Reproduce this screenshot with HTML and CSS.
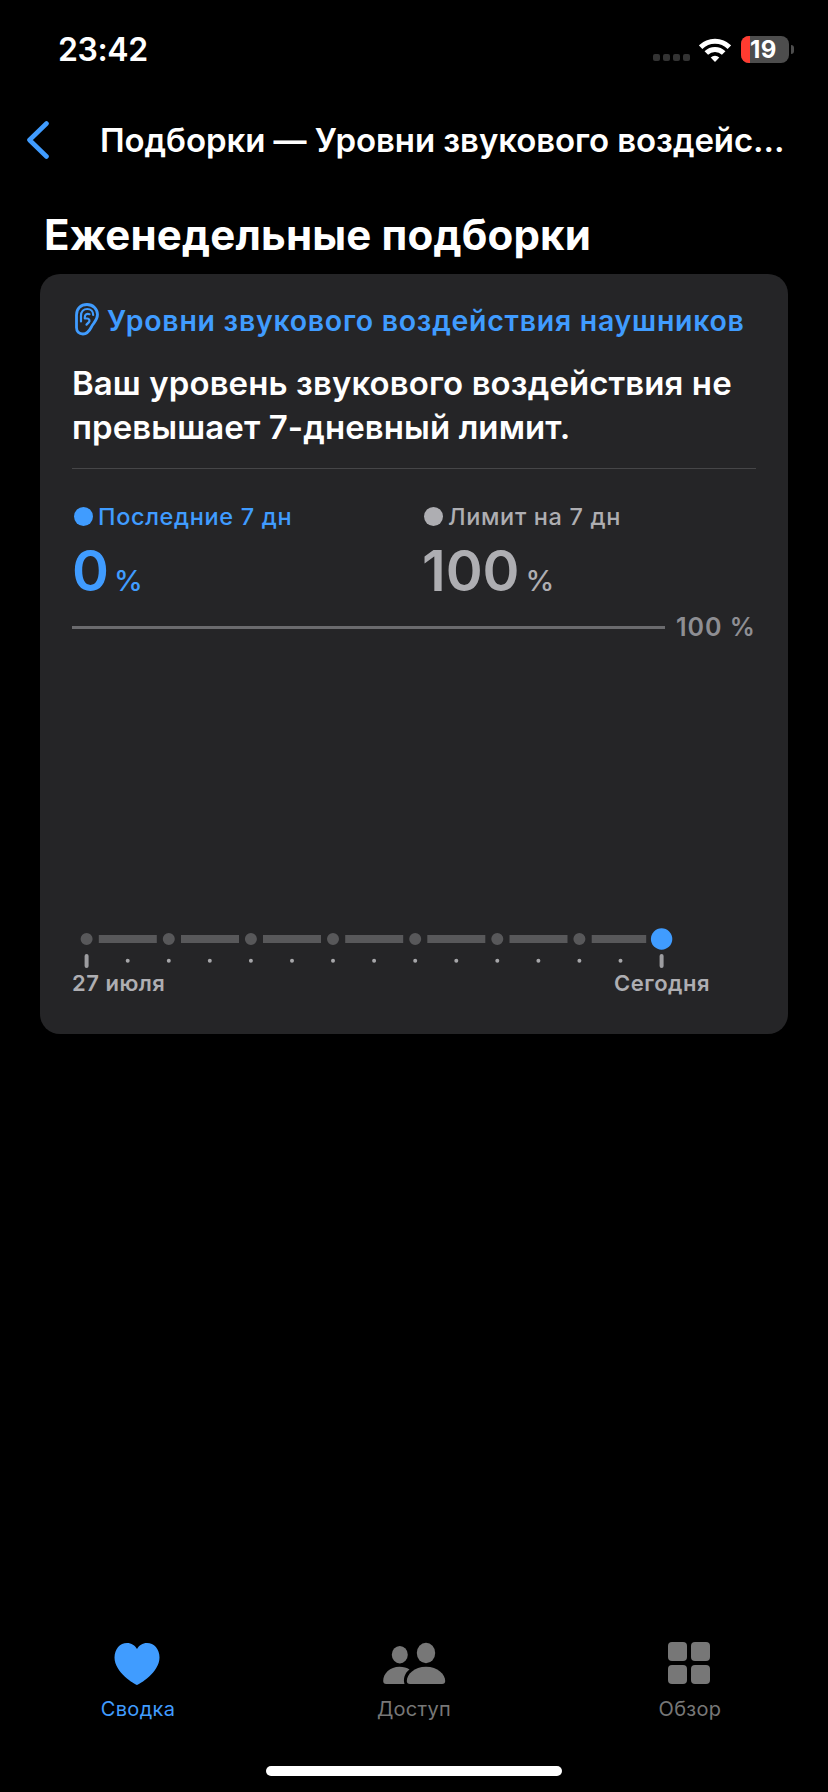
FILE: index.html
```html
<!DOCTYPE html>
<html lang="ru">
<head>
<meta charset="utf-8">
<title>Подборки</title>
<link rel="stylesheet" href="styles.css">
</head>
<body>
<div class="screen">
  <header class="status">
    <span class="time">23:42</span>
    <div class="status-icons">
      <div class="signal"><i></i><i></i><i></i><i></i></div>
      <svg class="wifi" width="32" height="24" viewBox="0 0 32 24">
        <g fill="none" stroke="#fff" stroke-width="5">
          <path d="M1.6 9.2a20.4 20.4 0 0 1 28.8 0"/>
          <path d="M7.3 15a12.3 12.3 0 0 1 17.4 0"/>
        </g>
        <path fill="#fff" d="M16 24l-4.3-4.4a6.1 6.1 0 0 1 8.6 0z"/>
      </svg>
      <div class="battery"><div class="charge"></div><span class="level">19</span></div>
      <div class="battery-cap"></div>
    </div>
  </header>
  <nav class="navbar">
    <svg class="back" width="24" height="40" viewBox="0 0 24 40"><path d="M21.500 3.500L4.500 20l17 16.500" fill="none" stroke="#409cff" stroke-width="4.600" stroke-linecap="round" stroke-linejoin="round"/></svg>
    <span class="nav-title">Подборки — Уровни звукового воздейс...</span>
  </nav>
  <h1 class="heading">Еженедельные подборки</h1>
  <main class="card">
    <div class="topic">
      <svg class="ear" width="24" height="33" viewBox="0 0 24 33" fill="none" stroke="#409cff" stroke-width="2.800" stroke-linecap="round" stroke-linejoin="round">
        <path d="M1.500 12C1.500 5.500 6 1.500 12 1.500S22.500 6 22.500 11.500c0 5-3 7.500-5 10.500s-3.500 9-9.500 9c-4 0-6.500-2.500-6.500-6.500z"/>
        <path d="M6 18.500V12.800c0-4.400 2.700-6.800 6.300-6.800s5.900 2.500 5.900 6" stroke-width="2.200"/>
        <path d="M14.500 11.200c-2.800-1-4.700.5-4.700 3v1.300h2.300c2.300 0 3.100 2.200 1.600 3.900l-2.200 2.200" stroke-width="2.200"/>
      </svg>
      <span class="topic-name">Уровни звукового воздействия наушников</span>
    </div>
    <p class="summary">Ваш уровень звукового воздействия не<br>превышает 7-дневный лимит.</p>
    <div class="stats">
      <section class="stat blue">
        <div class="legend"><i class="dot"></i><span>Последние 7 дн</span></div>
        <div class="value"><span class="num">0</span><span class="unit">%</span></div>
      </section>
      <section class="stat grey">
        <div class="legend"><i class="dot"></i><span>Лимит на 7 дн</span></div>
        <div class="value"><span class="num">100</span><span class="unit">%</span></div>
      </section>
    </div>
    <div class="limit"><div class="limit-line"></div><span class="limit-label">100 %</span></div>
    <svg class="timeline" width="684" height="48" viewBox="72 924 684 48">
      <path d="M98.800 939h58M181 939h58M263 939h58M345.200 939h58M427.300 939h58M509.500 939h58M591.700 939h54.500" stroke="#58585a" stroke-width="8"/>
      <path d="M86.600 939h0M168.800 939h0M250.900 939h0M333 939h0M415.200 939h0M497.300 939h0M579.400 939h0" stroke="#58585a" stroke-width="12" stroke-linecap="round"/>
      <circle cx="661.600" cy="939" r="10.700" fill="#409cff"/>
      <path d="M86.600 956v10M661.600 956v10" stroke="#9d9da0" stroke-width="4" stroke-linecap="round"/>
      <path d="M127.700 960.800h0M168.800 960.800h0M209.800 960.800h0M250.900 960.800h0M292 960.800h0M333 960.800h0M374.100 960.800h0M415.200 960.800h0M456.300 960.800h0M497.300 960.800h0M538.400 960.800h0M579.400 960.800h0M620.500 960.800h0" stroke="#a6a6a9" stroke-width="4" stroke-linecap="round"/>
    </svg>
    <div class="dates"><span>27 июля</span><span>Сегодня</span></div>
  </main>
  <footer class="tabs">
    <a class="tab active">
      <svg width="64" height="44" viewBox="0 0 64 44"><path fill="#409cff" d="M31 43C29 42.500 8.500 30.500 8.500 15.500 8.500 7 14 1 21 1c4.500 0 8 2.500 10 6 2-3.500 5.500-6 10-6 7 0 12.500 6 12.500 14.500C53.500 30.500 33 42.500 31 43z"/></svg>
      <span>Сводка</span>
    </a>
    <a class="tab">
      <svg width="64" height="44" viewBox="0 0 64 44" fill="#777"><ellipse cx="17.800" cy="12.700" rx="8" ry="8.700"/><ellipse cx="44" cy="11" rx="9.200" ry="10.200"/><path d="M4.200 42c-2 0-3-1-3-3C1.200 31.500 8 24.800 17.500 24.800c4 0 7.500 1 10 2.700-5 3.700-6.500 9.500-5 14.500z"/><path d="M28 42c-2.200 0-3.200-1-3.200-3 0-6.500 7.500-14.200 19.200-14.200s19.200 7.700 19.200 14.200c0 2-1 3-3.200 3z"/></svg>
      <span>Доступ</span>
    </a>
    <a class="tab">
      <svg width="64" height="44" viewBox="0 0 64 44" fill="#777"><rect x="10" y="0" width="19" height="19" rx="4"/><rect x="33" y="0" width="19" height="19" rx="4"/><rect x="10" y="23" width="19" height="19" rx="4"/><rect x="33" y="23" width="19" height="19" rx="4"/></svg>
      <span>Обзор</span>
    </a>
  </footer>
  <div class="home"></div>
</div>
</body>
</html>
```
FILE: styles.css
```css
* { box-sizing: border-box; }
body { margin: 0; background: #000; color: #fff; font-family: Inter, "Liberation Sans", sans-serif; font-weight: 600; }
.screen { width: 828px; height: 1792px; display: flex; flex-direction: column; overflow: hidden; white-space: nowrap; }
.status { height: 100px; display: flex; justify-content: space-between; padding: 30px 34px 0 58px; }
.time { font-size: 32px; line-height: 40px; letter-spacing: -0.4px; }
.status-icons { display: flex; height: 39px; align-items: center; }
.signal { display: flex; gap: 3px; margin: 16px 9px 0 0; }
.signal i { width: 7px; height: 7px; border-radius: 2px; background: #333; }
.wifi { margin-right: 10px; }
.battery { width: 48px; height: 27px; border-radius: 8px; background: #4d4d4d; overflow: hidden; display: flex; align-items: center; }
.charge { width: 9px; height: 27px; background: #ff3b30; }
.level { font-size: 24px; line-height: 27px; font-weight: 700; letter-spacing: 0.3px; }
.battery-cap { width: 3px; height: 9px; margin-left: 2px; border-radius: 0 4px 4px 0; background: #4d4d4d; }
.navbar { height: 80px; display: flex; align-items: center; padding-left: 25px; }
.nav-title { font-size: 33px; line-height: 40px; margin-left: 51px; letter-spacing: -0.08px; }
.heading { margin: 0; padding: 30px 0 0 44px; height: 94px; font-size: 42px; line-height: 50px; font-weight: 700; letter-spacing: 0.17px; }
.card { margin: 0 40px; height: 760px; border-radius: 20px; background: #252527; padding: 29px 32px 0; display: flex; flex-direction: column; }
.topic { display: flex; height: 36px; padding-left: 3px; color: #409cff; }
.topic-name { font-size: 28.500px; line-height: 36px; margin-left: 8px; letter-spacing: 0.72px; }
.summary { margin: 22px 0 0; height: 108px; font-size: 33px; line-height: 44px; border-bottom: 1px solid #464648; letter-spacing: 0.08px; }
.stats { display: grid; grid-template-columns: 350px 1fr; padding-top: 32px; height: 156px; }
.blue { color: #409cff; }
.grey { color: #aeaeb2; }
.legend { display: flex; align-items: center; height: 30px; padding-left: 2px; font-size: 23.500px; font-weight: 550; letter-spacing: 0.65px; }
.dot { width: 19px; height: 19px; border-radius: 50%; background: currentColor; margin-right: 5px; }
.value { display: flex; align-items: baseline; line-height: 70px; margin-top: 5px; }
.num { font-size: 56px; }
.unit { font-size: 29px; font-weight: 500; margin-left: 6px; }
.blue .unit { margin-left: 5px; }
.limit { display: flex; align-items: center; height: 30px; margin-top: -13px; }
.limit-line { width: 593px; height: 3px; background: #6b6b6e; margin-right: 11px; }
.limit-label { font-size: 25px; line-height: 30px; color: #8e8e93; letter-spacing: 1px; }
.timeline { margin-top: 282px; flex: none; }
.dates { display: flex; justify-content: space-between; color: #aeaeb2; font-size: 22px; line-height: 22px; padding-right: 46px; letter-spacing: 0.5px; }
.tabs { margin-top: 608px; display: grid; grid-template-columns: repeat(3, 276px); font-size: 20px; font-weight: 400; letter-spacing: 0.3px; color: #777; }
.tab { display: flex; flex-direction: column; align-items: center; line-height: 24px; gap: 11px; }
.active { color: #409cff; }
.home { width: 296px; height: 10px; border-radius: 5px; background: #fff; margin: 45px auto 0; }
```
